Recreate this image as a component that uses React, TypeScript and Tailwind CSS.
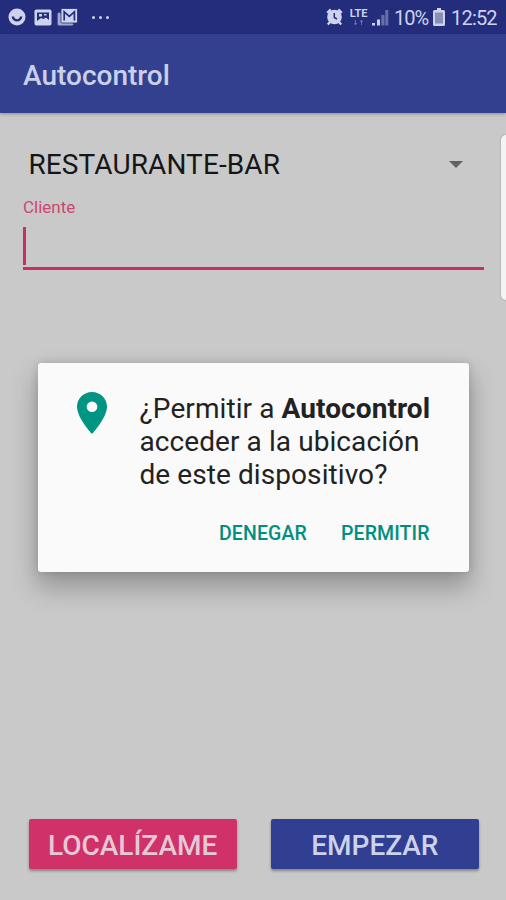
import React from 'react';

const StatusBar: React.FC = () => {
  return (
    <div className="flex h-[34px] items-center justify-between bg-[#232d7c] pl-[8px] pr-[8px] text-[#cdd2ee]">
      <div className="flex items-center">
        <svg className="h-[18px] w-[18px]" viewBox="0 0 18 18">
          <circle cx="9" cy="9" r="8.500" fill="currentColor" />
          <path d="M5 9.600c.8 2 2.200 2.700 4 2.700s3.200-.7 4-2.700" fill="none" stroke="#232d7c" strokeWidth="2.200" />
          <path d="M3.600 8.600h2.600v1.800H4.400zM14.400 8.600h-2.600v1.800h1.800z" fill="#232d7c" />
        </svg>
        <svg className="ml-[8px] h-[17px] w-[18px]" viewBox="0 0 18 17">
          <rect x=".5" y=".5" width="17" height="16" rx="1.800" fill="currentColor" />
          <path d="M3 3.500h12v7.500l-3-2.500-2.500 1.500-2.500-1L3 12z" fill="#232d7c" />
          <path d="M5 5h3v2.500H5zM10 5h2.500v1.500H10z" fill="currentColor" />
        </svg>
        <svg className="ml-[5px] h-[18px] w-[21px]" viewBox="0 0 21 18">
          <path d="M2.500 4.500H2A1.500 1.500 0 0 0 .6 6v10A1.500 1.500 0 0 0 2 17.400h13a1.500 1.500 0 0 0 1.500-1.400" fill="currentColor" opacity=".75" />
          <rect x="4" y=".5" width="16.500" height="14.500" rx="1.300" fill="currentColor" stroke="#232d7c" strokeWidth=".8" />
          <path d="M7.200 12.500V3.800l5.100 4.500 5.100-4.500v8.700" fill="none" stroke="#232d7c" strokeWidth="1.700" />
        </svg>
        <div className="ml-[14px] flex gap-[4px]">
          <span className="h-[3px] w-[3px] rounded-full bg-current" />
          <span className="h-[3px] w-[3px] rounded-full bg-current" />
          <span className="h-[3px] w-[3px] rounded-full bg-current" />
        </div>
      </div>

      <div className="flex items-center">
        <svg className="h-[18px] w-[17px]" viewBox="0 0 17 18">
          <circle cx="8.500" cy="9" r="7.300" fill="currentColor" />
          <path d="M1.200 4.800 4.800 1.500M12.200 1.500l3.600 3.300M4 14 1.800 16.500M13 14l2.200 2.500" stroke="currentColor" strokeWidth="2.400" />
          <path d="M8.300 5v4.500l2.700 1.500" fill="none" stroke="#232d7c" strokeWidth="1.500" />
        </svg>
        <div className="ml-[6px] flex h-[19px] w-[19px] flex-col items-center">
          <span className="text-[11px] font-bold leading-[12px] tracking-[-0.1px]">LTE</span>
          <svg className="h-[5px] w-[9px] opacity-40" viewBox="0 0 9 5">
            <path d="M1.500 0v4M0 3l1.500 2L3 3M7.500 5V1M6 2l1.500-2L9 2" fill="none" stroke="currentColor" />
          </svg>
        </div>
        <svg className="ml-[3px] h-[17px] w-[18px]" viewBox="0 0 18 17">
          <path d="M1 14h3v2.500H1zM6 10.500h3v6H6z" fill="currentColor" />
          <path d="M10.300 6h3.200v10.500h-3.200zM14.300 1h3v15.500h-3z" fill="currentColor" opacity=".4" />
        </svg>
        <span className="ml-[5px] mt-[2px] w-[34px] whitespace-nowrap text-[20px] leading-[24px] tracking-[-1px]">10%</span>
        <svg className="ml-[5px] h-[18px] w-[12px]" viewBox="0 0 12 18">
          <path d="M4 0h4v2h2.500A1.500 1.500 0 0 1 12 3.500v13a1.500 1.500 0 0 1-1.500 1.500h-9A1.500 1.500 0 0 1 0 16.500v-13A1.500 1.500 0 0 1 1.500 2H4z" fill="currentColor" />
          <path d="M2 4.500h8v11H2z" fill="#898eb6" />
        </svg>
        <span className="ml-[6px] mt-[2px] w-[47px] whitespace-nowrap text-[20px] leading-[24px] tracking-[-0.8px]">12:52</span>
      </div>
    </div>
  );
};

const PermissionDialog: React.FC = () => {
  return (
    <div className="absolute left-[37.500px] top-[362.500px] flex h-[209px] w-[431px] flex-col rounded-[3px] bg-[#fafafa] shadow-[0_14px_26px_2px_rgba(0,0,0,0.26),0_0_8px_rgba(0,0,0,0.14)]">
      <div className="flex pl-[39px] pt-[29px]">
        <svg className="h-[42px] w-[30px] shrink-0" viewBox="5 2 14 20" preserveAspectRatio="none">
          <path d="M12 2C8.130 2 5 5.130 5 9c0 5.250 7 13 7 13s7-7.750 7-13c0-3.870-3.130-7-7-7zm0 9.500a2.500 2.500 0 0 1 0-5 2.500 2.500 0 0 1 0 5z" fill="#009483" />
        </svg>
        <div className="ml-[33px] text-[28px] leading-[33px] tracking-[0.08px] text-[#222]">
          <p className="whitespace-nowrap">
            ¿Permitir a <b className="font-bold">Autocontrol</b>
          </p>
          <p className="whitespace-nowrap">acceder a la ubicación</p>
          <p className="whitespace-nowrap">de este dispositivo?</p>
        </div>
      </div>
      <div className="mt-[31px] flex justify-end gap-[34px] pr-[39.500px] text-[19.500px] font-medium leading-[24px] tracking-[0.1px] text-[#008f7f]">
        <button className="w-[88px] whitespace-nowrap text-left">DENEGAR</button>
        <button className="w-[88px] whitespace-nowrap text-left">PERMITIR</button>
      </div>
    </div>
  );
};

export default function App() {
  return (
    <div className="relative flex h-[900px] w-[506px] flex-col overflow-hidden bg-[#c9c9c9] font-['Roboto','Liberation_Sans',sans-serif]">
      <StatusBar />
      <header className="flex h-[79px] shrink-0 items-center bg-[#32408f] pl-[23px] pt-[4px] shadow-[0_1px_3px_rgba(0,0,0,0.3)]">
        <h1 className="text-[28px] font-medium leading-[32px] text-[#c9d0e8]">Autocontrol</h1>
      </header>

      <main className="flex flex-1 flex-col pl-[23px] pr-[22px]">
        <div className="mt-[34px] flex h-[34px] items-center justify-between pl-[5.500px] pr-[21px]">
          <span className="text-[28px] leading-[33px] tracking-[0.1px] text-[#161616]">RESTAURANTE-BAR</span>
          <svg className="h-[7px] w-[14px]" viewBox="0 0 14 7">
            <path d="M0 0h14L7 7z" fill="#636363" />
          </svg>
        </div>
        <label className="mt-[16px] text-[17px] leading-[20px] text-[#cf4573]">Cliente</label>
        <div className="mt-[9px] h-[44px] border-b-[3px] border-[#c92f63] pt-px">
          <div className="h-[38px] w-[3px] bg-[#c92f63]" />
        </div>
        <div className="mt-auto mb-[31px] flex gap-[34px] pl-[5.500px] pr-[5px]">
          <button className="h-[50px] flex-1 rounded-[2px] bg-[#d03168] pt-[3px] text-[28px] font-medium text-[#e3c9d6] shadow-[0_2px_3px_rgba(0,0,0,0.35)]">LOCALÍZAME</button>
          <button className="h-[50px] flex-1 rounded-[2px] bg-[#303f92] pt-[3px] text-[28px] font-medium text-[#ccd2ea] shadow-[0_2px_3px_rgba(0,0,0,0.35)]">EMPEZAR</button>
        </div>
      </main>

      {/* Edge panel handle */}
      <div className="absolute right-0 top-[135px] h-[165px] w-[5px] rounded-l-[5px] bg-[#f4f4f4] shadow-[0_0_2px_rgba(0,0,0,0.3)]" />
      <PermissionDialog />
    </div>
  );
}
